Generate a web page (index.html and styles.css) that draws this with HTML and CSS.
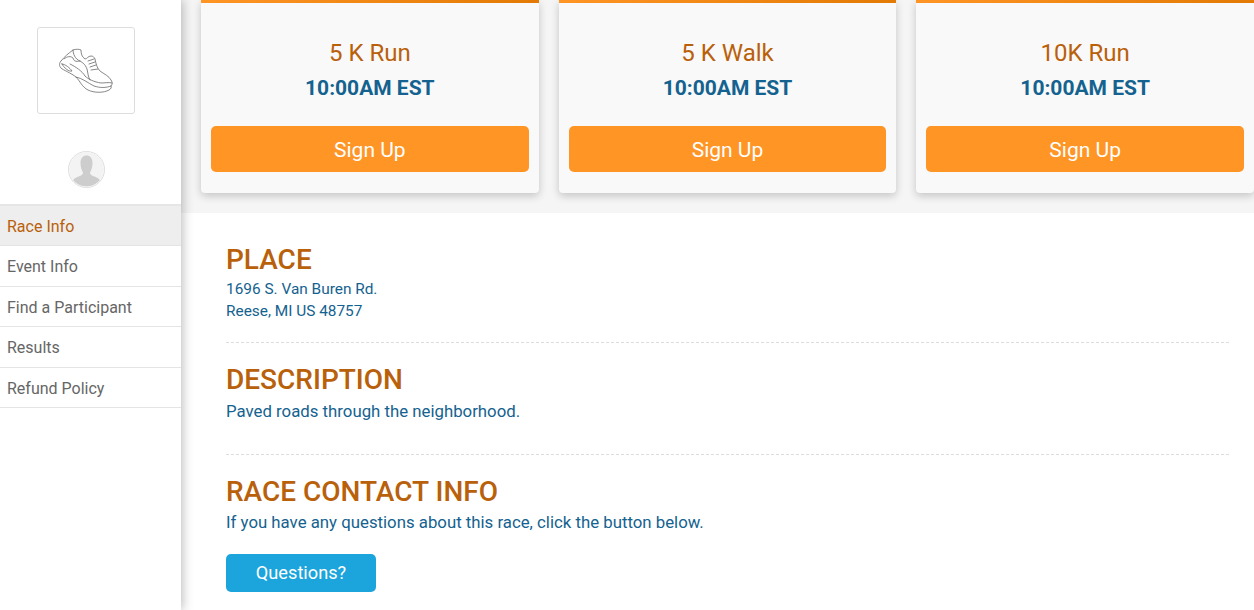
FILE: index.html
```html
<!DOCTYPE html>
<html lang="en">
<head>
    <meta charset="UTF-8">
    <meta name="viewport" content="width=device-width, initial-scale=1.0">
    <title>Race Info</title>
    <link rel="stylesheet" href="styles.css">
</head>
<body>
    <div class="page">
        <aside class="sidebar">
            <div class="logo-box">
                <svg class="shoe" width="56" height="48" viewBox="0 0 56 48" fill="none" stroke="#6a6a6a" stroke-width="0.8" stroke-linejoin="round" stroke-linecap="round">
                    <!-- upper -->
                    <path d="M3 14C6 10 11 6 15 3C18 2 21 2 23 3C23 7 24 10 27 12C29 12 30 9 33 9C35 9 36 10 37 12C38 17 39 21 42 24C46 27 51 29 53 33C55 36 54 38 53 39"/>
                    <!-- sole -->
                    <path d="M3 14C1 16 1 19 3 21C5 23 13 26 18 30C22 34 24 40 30 43C36 46 46 46 51 43C53 42 54 40 53 39"/>
                    <path d="M12 17C18 20 24 24 27 29C30 32 36 35 43 36C47 36 51 35 54 36"/>
                    <path d="M18 30C24 31 30 36 36 39C42 41 48 41 53 39"/>
                    <!-- heel -->
                    <path d="M4 17C7 17 12 21 14 24C11 25 6 21 4 17Z"/>
                    <path d="M6 12C9 9 13 9 15 11C16 14 17 15 22 14"/>
                    <path d="M15 3C15 7 17 12 22 14C25 16 27 17 29 22C30 26 30 30 32 33"/>
                    <!-- laces -->
                    <path d="M30 14L36 12M31 17L37 15M32 20L38 18M33 23L40 22"/>
                </svg>
            </div>
            <div class="avatar">
                <svg width="35" height="35" viewBox="0 0 35 35">
                    <circle cx="17.5" cy="17.5" r="17.5" fill="#f3f3f3"/>
                    <path d="M11.5 11C11.5 6 14 3.500 17.500 3.500C21 3.500 23.500 6 23.500 11C23.500 15 22.500 18 21 20.500C21 22 22 23 24 24C27 25.200 29.500 26 31 28A17.500 17.500 0 0 1 4 28C5.500 26 8 25.200 11 24C13 23 14 22 14 20.500C12.500 18 11.500 15 11.500 11Z" fill="#cdcdcd"/>
                </svg>
            </div>
            <nav class="side-nav">
                <a class="nav-item active" href="#">Race Info</a>
                <a class="nav-item" href="#">Event Info</a>
                <a class="nav-item" href="#">Find a Participant</a>
                <a class="nav-item" href="#">Results</a>
                <a class="nav-item" href="#">Refund Policy</a>
            </nav>
        </aside>
        <main class="main">
            <section class="cards">
                <div class="card">
                    <h2 class="card-title">5 K Run</h2>
                    <div class="card-time">10:00AM EST</div>
                    <a class="signup" href="#">Sign Up</a>
                </div>
                <div class="card">
                    <h2 class="card-title">5 K Walk</h2>
                    <div class="card-time">10:00AM EST</div>
                    <a class="signup" href="#">Sign Up</a>
                </div>
                <div class="card">
                    <h2 class="card-title">10K Run</h2>
                    <div class="card-time">10:00AM EST</div>
                    <a class="signup" href="#">Sign Up</a>
                </div>
            </section>
            <section class="details">
                <div class="block block-place">
                    <h3>PLACE</h3>
                    <p class="address">1696 S. Van Buren Rd.<br>Reese, MI US 48757</p>
                </div>
                <div class="block block-desc">
                    <h3>DESCRIPTION</h3>
                    <p>Paved roads through the neighborhood.</p>
                </div>
                <div class="block block-contact">
                    <h3>RACE CONTACT INFO</h3>
                    <p>If you have any questions about this race, click the button below.</p>
                    <a class="questions" href="#">Questions?</a>
                </div>
            </section>
        </main>
    </div>
</body>
</html>
```

FILE: styles.css
```css
html, body {
    margin: 0;
    height: 100%;
    overflow: hidden;
}
body {
    font-family: Roboto, "Liberation Sans", sans-serif;
    background: #fff;
}
a {
    text-decoration: none;
}
.page {
    display: flex;
    height: 610px;
}
.sidebar {
    position: relative;
    z-index: 2;
    width: 181px;
    flex-shrink: 0;
    background: #fff;
    box-shadow: 2px 0 10px rgba(0, 0, 0, 0.25);
    padding-top: 27px;
    box-sizing: border-box;
}
.logo-box {
    width: 98px;
    height: 87px;
    margin-left: 37px;
    border: 1px solid #ddd;
    border-radius: 3px;
    box-sizing: border-box;
    display: flex;
    align-items: center;
    justify-content: center;
}
.avatar {
    width: 37px;
    height: 37px;
    margin: 37px 0 16px 68px;
    border: 1px solid #ddd;
    border-radius: 50%;
    box-sizing: border-box;
    overflow: hidden;
}
.avatar svg {
    display: block;
}
.side-nav {
    border-top: 2px solid #e6e6e6;
}
.nav-item {
    display: block;
    height: 40.5px;
    line-height: 41px;
    padding-left: 7px;
    box-sizing: border-box;
    border-bottom: 1px solid #e4e4e4;
    font-size: 16px;
    color: #666;
}
.nav-item.active {
    height: 40px;
    background: #eee;
    color: #b9600b;
}
.main {
    flex: 1;
    min-width: 0;
}
.cards {
    display: grid;
    grid-template-columns: repeat(3, 1fr);
    gap: 20px;
    height: 213px;
    padding-left: 20px;
    background: #f5f5f5;
    box-sizing: border-box;
}
.card {
    height: 193px;
    padding: 0 10px;
    background: #f9f9f9;
    border-radius: 0 0 4px 4px;
    box-shadow: 0 3px 8px rgba(0, 0, 0, 0.2);
    box-sizing: border-box;
    text-align: center;
    overflow: hidden;
    background-image: linear-gradient(to right, #ff9525, #e37a05);
    background-size: 100% 3px;
    background-repeat: no-repeat;
}
.card-title {
    margin: 38px 0 0;
    font-size: 24px;
    line-height: 30px;
    font-weight: 400;
    color: #b9600b;
}
.card-time {
    margin-top: 5px;
    font-size: 21px;
    line-height: 30px;
    font-weight: 700;
    color: #14628f;
}
.signup {
    display: block;
    height: 46px;
    margin-top: 23px;
    line-height: 48px;
    background: #ff9525;
    border-radius: 5px;
    font-size: 21px;
    color: #fff;
}
.details {
    padding: 0 25px 0 45px;
}
.block h3 {
    margin: 0;
    font-size: 28px;
    line-height: 32px;
    font-weight: 500;
    color: #b9600b;
}
.block p {
    margin: 0;
    color: #14628f;
    font-size: 16.8px;
    line-height: 24px;
}
.block-place {
    height: 130px;
    padding-top: 31px;
    box-sizing: border-box;
    border-bottom: 1px dashed #ddd;
}
.block-place p.address {
    margin-top: 2px;
    font-size: 15.4px;
    line-height: 22px;
}
.block-desc {
    height: 112px;
    padding-top: 21px;
    box-sizing: border-box;
    border-bottom: 1px dashed #ddd;
}
.block-desc p {
    margin-top: 3px;
}
.block-contact {
    padding-top: 21px;
}
.block-contact p {
    margin-top: 2px;
}
.questions {
    display: block;
    width: 150px;
    height: 38px;
    margin-top: 20px;
    line-height: 38px;
    background: #1ca4dc;
    border-radius: 5px;
    text-align: center;
    font-size: 18.2px;
    color: #fff;
}
```
